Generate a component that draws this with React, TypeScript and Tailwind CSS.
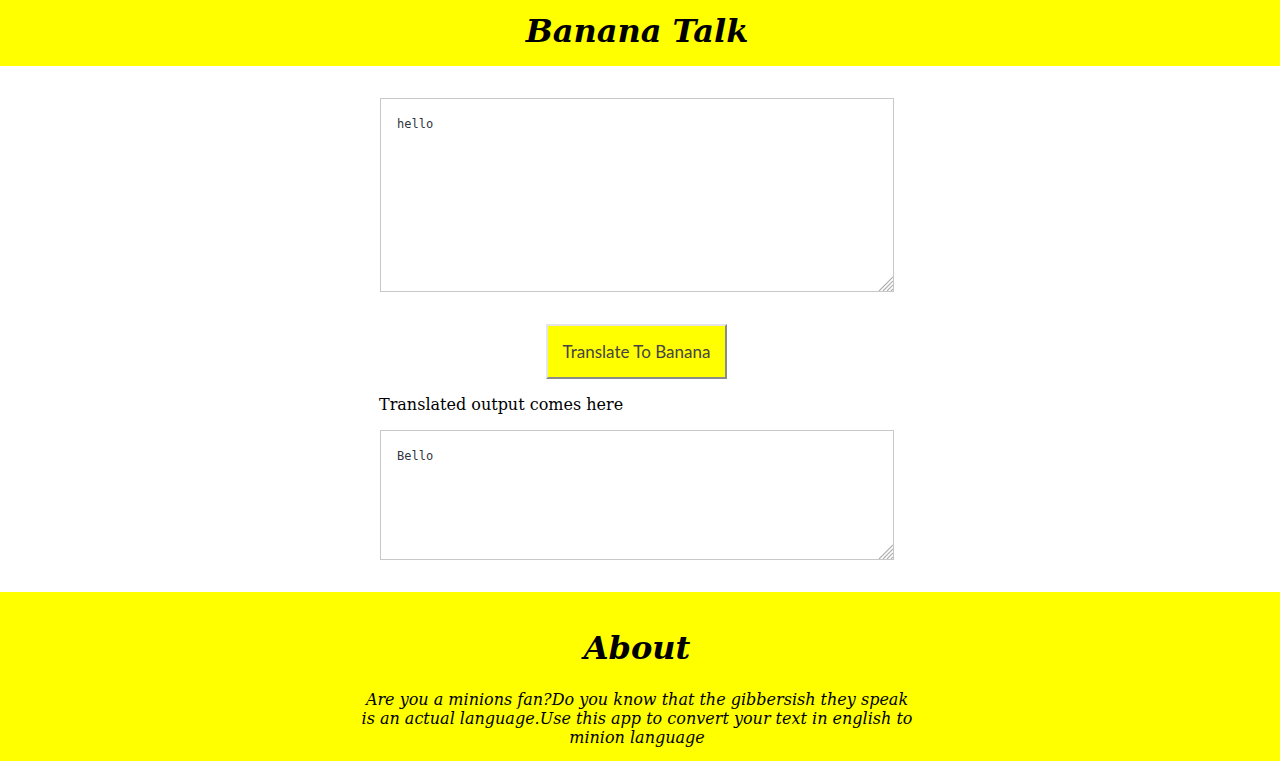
export default function App() {
  return (
    <div className="min-h-screen bg-white font-['DejaVu_Serif',serif] text-black">
      {/* Header */}
      <header className="bg-[#ffff00] h-[66px] flex items-center justify-center pr-[6px]">
        <h1 className="text-[32px] font-bold italic leading-none -mt-[4px]">Banana Talk</h1>
      </header>

      {/* Translator */}
      <div className="pr-[6px]">
        <main className="w-[514px] mx-auto pt-[32px] pb-[32px] flex flex-col">
          <div className="relative">
            <textarea
              defaultValue="hello"
              className="block w-[514px] h-[194px] border border-[#c8c8c8] p-[16px] font-['DejaVu_Sans_Mono',monospace] text-[12px] text-[#2f3640] bg-white outline-none resize-none"
            />
            <Grip />
          </div>
          <div className="flex justify-center mt-[32px] pr-[1px]">
            <button className="w-[181px] h-[55px] bg-[#ffff00] text-[#444] text-[17px] font-['Lato',sans-serif] border-2 border-t-[#e5e5e5] border-l-[#e5e5e5] border-b-[#8a8a8a] border-r-[#8a8a8a]">
              Translate To Banana
            </button>
          </div>
          <p className="text-[16px] leading-[20px] mt-[16px] -ml-[1px]">Translated output comes here</p>
          <div className="relative mt-[15px]">
            <textarea
              defaultValue="Bello"
              className="block w-[514px] h-[130px] border border-[#c8c8c8] p-[16px] font-['DejaVu_Sans_Mono',monospace] text-[12px] text-[#2f3640] bg-white outline-none resize-none"
            />
            <Grip />
          </div>
        </main>
      </div>

      {/* About */}
      <footer className="bg-[#ffff00] pt-[38px] pb-[24px] flex flex-col items-center pr-[6px]">
        <h2 className="text-[32px] font-bold italic leading-[37px]">About</h2>
        <p className="mt-[23px] w-[556px] text-center italic text-[16px] leading-[19px]">
          Are you a minions fan?Do you know that the gibbersish they speak is an actual language.Use this app to convert your text in english to minion language
        </p>
      </footer>
    </div>
  );
}

function Grip() {
  return (
    <svg
      className="absolute right-[1px] bottom-[1px] pointer-events-none"
      width="15"
      height="15"
      viewBox="0 0 15 15"
    >
      <path
        d="M15 1 L1 15 M15 5 L5 15 M15 9 L9 15 M15 13 L13 15"
        stroke="#b0b0b0"
        strokeWidth="1.2"
        fill="none"
      />
    </svg>
  );
}
